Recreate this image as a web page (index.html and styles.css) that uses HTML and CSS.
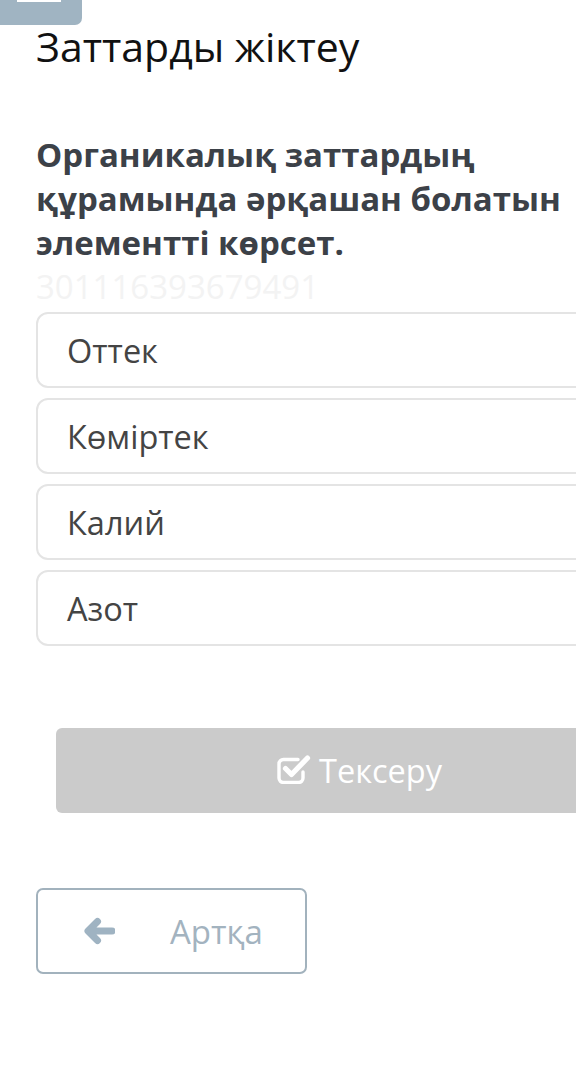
FILE: index.html
```html
<!DOCTYPE html>
<html lang="kk">
<head>
<meta charset="utf-8">
<title>Заттарды жіктеу</title>
<link rel="stylesheet" href="styles.css">
</head>
<body>
<div class="page">
  <div class="toptab"><span class="toptab-bar"></span></div>
  <div class="content">
    <h1 class="title">Заттарды жіктеу</h1>
    <p class="question">Органикалық заттардың құрамында әрқашан болатын элементті көрсет.</p>
    <div class="qid">301116393679491</div>
    <div class="options">
      <div class="option">Оттек</div>
      <div class="option">Көміртек</div>
      <div class="option">Калий</div>
      <div class="option">Азот</div>
    </div>
    <div class="check-btn">
      <svg class="check-icon" width="34" height="30" viewBox="0 0 34 30">
        <path d="M21 5.5 H6.5 a4.5 4.5 0 0 0 -4.5 4.5 V24 a4.5 4.5 0 0 0 4.5 4.5 H21.5 a4.5 4.5 0 0 0 4.5 -4.5 V18" fill="none" stroke="#fff" stroke-width="3.4" stroke-linecap="round"/>
        <path d="M8.5 14.5 L14.5 20.5 L30.5 4" fill="none" stroke="#fff" stroke-width="5.2" stroke-linecap="round" stroke-linejoin="round"/>
      </svg>
      <span>Тексеру</span>
    </div>
    <div class="back-btn">
      <svg class="back-icon" width="34" height="28" viewBox="0 0 34 28">
        <path d="M31 14 H8 M16.5 4.5 L7 14 L16.5 23.5" fill="none" stroke="#9fb3c2" stroke-width="7" stroke-linecap="round" stroke-linejoin="round"/>
      </svg>
      <span>Артқа</span>
    </div>
  </div>
</div>
</body>
</html>
```
FILE: styles.css
```css
html, body {
  margin: 0;
  padding: 0;
  background: #ffffff;
}
body {
  width: 576px;
  height: 1075px;
  overflow: hidden;
  font-family: "Open Sans", "Noto Sans", sans-serif;
}
.page {
  width: 576px;
  overflow: hidden;
}
.toptab {
  width: 82px;
  height: 25px;
  background: #a0b4c2;
  border-bottom-right-radius: 7px;
  display: flex;
  justify-content: center;
}
.toptab-bar {
  display: block;
  width: 44px;
  height: 2px;
  margin-left: -4px;
  background: #ffffff;
}
.content {
  width: 627px;
  padding-left: 36px;
}
.title {
  margin: 1px 0 0 0;
  font-size: 41px;
  line-height: 40px;
  font-weight: 400;
  color: #111111;
  white-space: nowrap;
}
.question {
  margin: 67px 0 0 0;
  width: 560px;
  font-size: 33px;
  line-height: 44px;
  font-weight: 700;
  color: #3c4148;
}
.qid {
  margin-top: 4px;
  font-size: 33px;
  line-height: 36px;
  color: #f3f3f3;
}
.options {
  margin-top: 7px;
  display: flex;
  flex-direction: column;
  gap: 10px;
}
.option {
  box-sizing: border-box;
  height: 76px;
  border: 2px solid #e4e4e4;
  border-radius: 12px;
  padding-left: 29px;
  display: flex;
  align-items: center;
  font-size: 32.5px;
  color: #444444;
}
.check-btn {
  box-sizing: border-box;
  margin: 82px 0 0 20px;
  width: 607px;
  height: 85px;
  background: #cbcbcb;
  border-radius: 6px;
  display: flex;
  align-items: center;
  justify-content: center;
  gap: 8px;
  color: #ffffff;
  font-size: 32.5px;
}
.check-icon {
  margin-top: -4px;
}
.back-btn {
  box-sizing: border-box;
  margin-top: 75px;
  width: 271px;
  height: 86px;
  border: 2px solid #a2b2bd;
  border-radius: 7px;
  padding-left: 43px;
  display: flex;
  align-items: center;
  gap: 55px;
  color: #a3b3bf;
  font-size: 33px;
}
```
